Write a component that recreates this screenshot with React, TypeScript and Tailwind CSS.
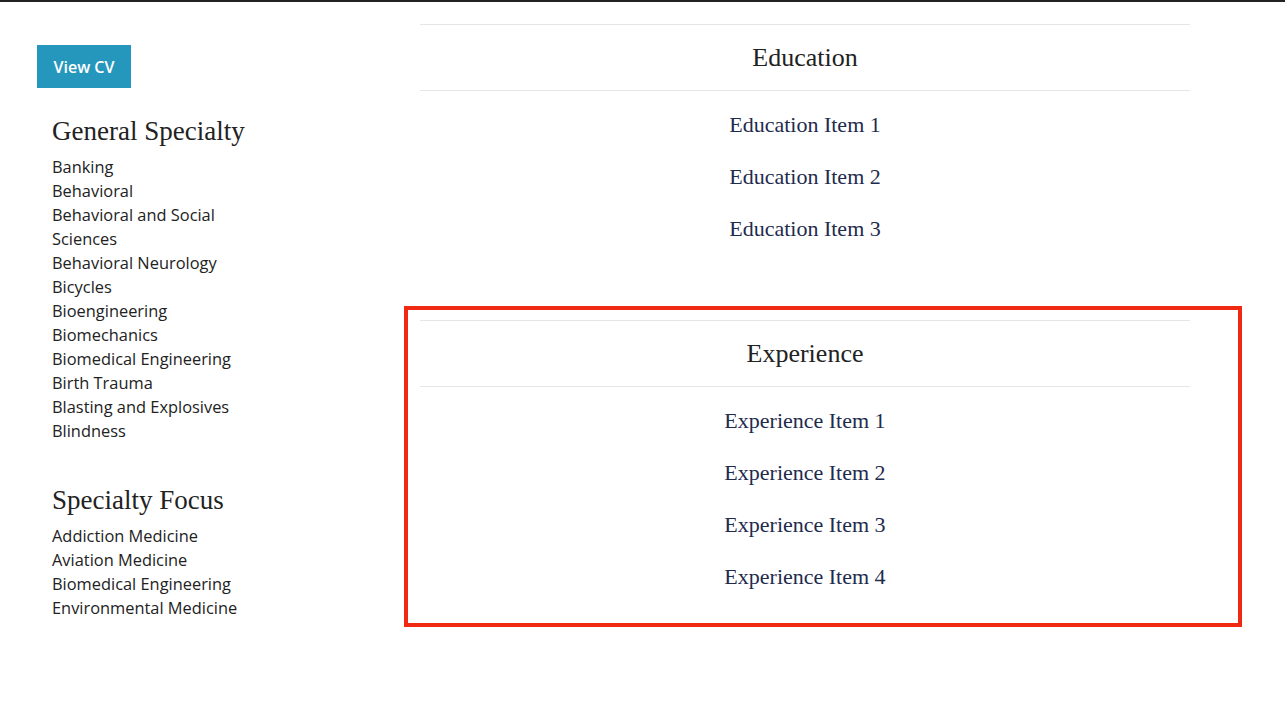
const general = [
  "Banking",
  "Behavioral",
  "Behavioral and Social Sciences",
  "Behavioral Neurology",
  "Bicycles",
  "Bioengineering",
  "Biomechanics",
  "Biomedical Engineering",
  "Birth Trauma",
  "Blasting and Explosives",
  "Blindness",
];

const focus = [
  "Addiction Medicine",
  "Aviation Medicine",
  "Biomedical Engineering",
  "Environmental Medicine",
];

const serif = "font-['Liberation_Serif',serif]";

function SpecialtyList({ title, items, className }: { title: string; items: string[]; className: string }) {
  return (
    <div className={className}>
      <h2 className={`${serif} text-[27px] leading-[36px] text-[#222]`}>{title}</h2>
      <ul className="mt-[6px] w-[200px] text-[16.4px] leading-[24px] text-[#222]">
        {items.map((it) => (
          <li key={it}>{it}</li>
        ))}
      </ul>
    </div>
  );
}

function Section({ title, items }: { title: string; items: string[] }) {
  return (
    <div className="w-[770px]">
      <div className="flex h-[67px] items-center justify-center border-y border-[#e6e6e6]">
        <h3 className={`${serif} text-[26px] text-[#222]`}>{title}</h3>
      </div>
      <ul className={`${serif} pt-[8px] text-center text-[22px] leading-[52px] text-[#1e2b4d]`}>
        {items.map((it) => (
          <li key={it}>{it}</li>
        ))}
      </ul>
    </div>
  );
}

export default function App() {
  return (
    <div className="min-h-[717px] border-t-2 border-[#222] bg-white font-['Open_Sans',sans-serif]">
      <div className="flex">
        <aside className="w-[404px] shrink-0 pl-[37px]">
          <button className="mt-[43px] h-[43px] w-[94px] bg-[#2596bc] text-[16px] font-semibold text-white">
            View CV
          </button>
          <SpecialtyList title="General Specialty" items={general} className="mt-[25px] pl-[15px]" />
          <SpecialtyList title="Specialty Focus" items={focus} className="mt-[39px] pl-[15px]" />
        </aside>
        <main className="w-[838px] shrink-0">
          <div className="mt-[22px] pl-[16px]">
            <Section title="Education" items={["Education Item 1", "Education Item 2", "Education Item 3"]} />
          </div>
          <div className="mt-[51px] border-4 border-[#f02a12] pb-[20px] pl-[12px] pt-[10px]">
            <Section
              title="Experience"
              items={["Experience Item 1", "Experience Item 2", "Experience Item 3", "Experience Item 4"]}
            />
          </div>
        </main>
      </div>
    </div>
  );
}
